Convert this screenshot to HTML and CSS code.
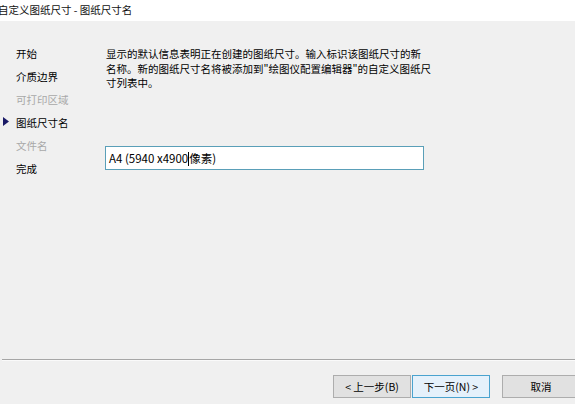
FILE: index.html
```html
<!DOCTYPE html>
<html lang="zh-CN">
<head>
<meta charset="utf-8">
<title>自定义图纸尺寸 - 图纸尺寸名</title>
<link rel="stylesheet" href="styles.css">
</head>
<body>
<div class="window">
  <div class="titlebar">自定义图纸尺寸 - 图纸尺寸名</div>
  <div class="main">
    <ul class="steps">
      <li class="step">开始</li>
      <li class="step">介质边界</li>
      <li class="step disabled">可打印区域</li>
      <li class="step current">
        <svg class="marker" width="6" height="9" viewBox="0 0 6 9"><path d="M0 0 L6 4.5 L0 9 Z" fill="#1a1a66"/></svg>
        图纸尺寸名
      </li>
      <li class="step disabled">文件名</li>
      <li class="step">完成</li>
    </ul>
    <div class="content">
      <p class="desc">显示的默认信息表明正在创建的图纸尺寸。输入标识该图纸尺寸的新<br>名称。新的图纸尺寸名将被添加到"绘图仪配置编辑器"的自定义图纸尺<br>寸列表中。</p>
      <div class="field">A4 (5940 x4900<span class="caret"></span>像素)</div>
    </div>
  </div>
  <div class="separator"></div>
  <div class="footer">
    <button class="btn">&lt; 上一步(B)</button>
    <button class="btn default">下一页(N) &gt;</button>
    <button class="btn cancel">取消</button>
  </div>
</div>
</body>
</html>
```
FILE: styles.css
```css
html, body {
  margin: 0;
  padding: 0;
  width: 575px;
  height: 404px;
  overflow: hidden;
  background: #f0f0f0;
  font-family: "Noto Sans CJK SC", "Noto Sans", sans-serif;
  font-size: 10.5px;
  color: #000;
}

.window {
  display: flex;
  flex-direction: column;
  height: 404px;
}

.titlebar {
  height: 21px;
  line-height: 20px;
  background: #ffffff;
  text-indent: -2px;
  font-size: 10.5px;
  color: #111;
}

.main {
  flex: 1;
  display: flex;
}

.steps {
  list-style: none;
  margin: 0;
  padding: 21px 0 0 0;
  width: 106px;
}

.step {
  position: relative;
  height: 23px;
  line-height: 23px;
  padding-left: 16px;
  white-space: nowrap;
}

.step.disabled {
  color: #a8a8a8;
}

.marker {
  position: absolute;
  left: 3px;
  top: 6px;
}

.content {
  display: flex;
  flex-direction: column;
}

.desc {
  margin: 0;
  padding-top: 26px;
  line-height: 14.5px;
  white-space: nowrap;
}

.field {
  margin-top: 55px;
  margin-left: -1px;
  width: 314px;
  height: 22px;
  line-height: 22px;
  padding-left: 3px;
  background: #ffffff;
  border: 1px solid #5a9fb8;
  font-size: 11.5px;
  white-space: nowrap;
}

.caret {
  display: inline-block;
  width: 1px;
  height: 14px;
  background: #000;
  vertical-align: -3px;
}

.separator {
  height: 1px;
  margin-left: 2px;
  background: #a6a6a6;
  border-bottom: 1px solid #fafafa;
}

.footer {
  display: flex;
  padding: 14px 0 6px 333px;
  gap: 1px;
}

.btn {
  width: 78px;
  height: 23px;
  padding: 0;
  font-family: inherit;
  font-size: 10.5px;
  color: #000;
  background: #e1e1e1;
  border: 1px solid #adadad;
  flex-shrink: 0;
}

.btn.default {
  background: #e5f1fb;
  border-color: #4aa3cf;
}

.btn.cancel {
  margin-left: 11px;
}
```
